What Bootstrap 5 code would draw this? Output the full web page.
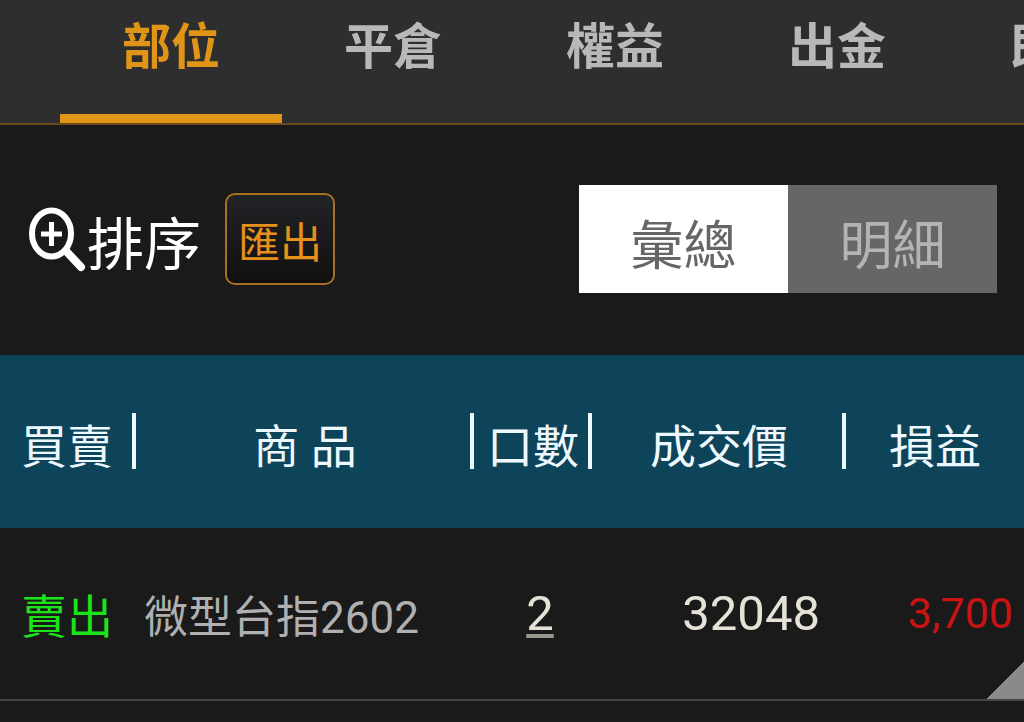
<!DOCTYPE html>
<html lang="zh-Hant">
<head>
<meta charset="utf-8">
<meta name="viewport" content="width=device-width, initial-scale=1">
<title>部位</title>
<link rel="stylesheet" href="https://cdn.jsdelivr.net/npm/bootstrap@5.3.0/dist/css/bootstrap.min.css">
<style>
  body { background: #1a1a1a; color: #fff; font-family: Roboto, "Noto Sans CJK TC", sans-serif; }
  button, a { font-family: inherit; }

  /* Tab strip */
  .tab-strip { background: #2e2e2e; border-bottom: 2px solid #694a1c; padding-left: 60px; }
  .tab-strip .nav-link { flex: 0 0 222px; height: 123px; padding: 12px 0 0; border-bottom: 9px solid transparent; border-radius: 0;
    color: #b8b8b8; font-size: 49px; font-weight: 700; line-height: 72px; text-align: center; white-space: nowrap; }
  .tab-strip .nav-link.active { color: #e09418; border-bottom-color: #e09418; }

  /* Toolbar */
  .toolbar { padding: 60px 27px 62px 28px; }
  .sort-btn { color: #fff; font-size: 57px; line-height: 80px; }
  .sort-btn span { padding-top: 14px; }
  .sort-btn svg { margin-right: 1px; }
  .export-btn { width: 110px; height: 92px; padding: 10px 0 0; border: 2px solid #a8701f; border-radius: 10px;
    background: linear-gradient(#222326, #101010); color: #e8911a; font-size: 42px; line-height: 60px; }
  .mode-switch .btn { width: 209px; height: 108px; padding: 16px 0 0; border: 0; border-radius: 0; background: #666; color: #b4b4b4; font-size: 53px; line-height: 80px; }
  .mode-switch .btn.active { background: #fff; color: #666; }

  /* Positions */
  .positions { table-layout: fixed; }
  .positions th, .positions td { padding: 0; white-space: nowrap; vertical-align: middle; }
  .positions th { height: 173px; padding-top: 12px; background: #0e4459 no-repeat right 58px / 4px 56px; color: #eef8ff; font-size: 46px; font-weight: 400; }
  .positions th:not(:last-child) { background-image: linear-gradient(#eef8ff, #eef8ff); }
  .positions td { height: 172px; border-bottom: 2px solid #444; font-size: 44px; }
  .positions .side-cell { padding-left: 21px; font-size: 46px; }
  .positions td.side-cell, .positions .product { padding-top: 8px; }
  .col-side { width: 136px; }
  .col-lots { width: 118px; }
  .col-price { width: 254px; }
  .col-profit { width: 178px; }
  .sell { color: #1be41b; }
  .positions .product { padding-left: 8px; color: #b0b0b0; }
  .positions .num { font-size: 49px; color: #e6e2d8; }
  .positions .lots { padding-left: 14px; }
  .lots a { color: inherit; text-decoration-color: #99968f; text-decoration-thickness: 4px; text-underline-offset: 4px; }
  .positions .price { padding-right: 26px; }
  .positions .profit { padding-right: 11px; color: #c91414; font-size: 43px;
    background: linear-gradient(135deg, transparent 50%, #8a8a8a 50%) no-repeat right bottom / 37px 37px; }
</style>
</head>
<body>
<nav class="nav tab-strip flex-nowrap overflow-hidden" aria-label="帳務">
  <a class="nav-link active" href="#" aria-current="page">部位</a>
  <a class="nav-link" href="#">平倉</a>
  <a class="nav-link" href="#">權益</a>
  <a class="nav-link" href="#">出金</a>
  <a class="nav-link" href="#">即時</a>
</nav>

<main>
  <div class="toolbar d-flex align-items-center justify-content-between">
    <div class="d-flex align-items-center gap-4">
      <button type="button" class="sort-btn btn p-0 border-0 d-flex align-items-center">
        <svg width="58" height="66" viewBox="0 0 58 66" fill="none" stroke="#fff" aria-hidden="true">
          <ellipse cx="23.500" cy="27.500" rx="19.500" ry="23" stroke-width="6"/>
          <path d="M23.500 16v24M13 28h21" stroke-width="5"/>
          <path d="M38 45L53 61" stroke-width="8" stroke-linecap="round"/>
        </svg>
        <span>排序</span>
      </button>
      <button type="button" class="export-btn btn">匯出</button>
    </div>
    <div class="mode-switch d-flex" role="group" aria-label="顯示方式">
      <button type="button" class="btn active" aria-pressed="true">彙總</button>
      <button type="button" class="btn" aria-pressed="false">明細</button>
    </div>
  </div>

  <table class="positions w-100">
    <colgroup>
      <col class="col-side"><col><col class="col-lots"><col class="col-price"><col class="col-profit">
    </colgroup>
    <thead>
      <tr>
        <th scope="col" class="side-cell">買賣</th>
        <th scope="col" class="text-center">商 品</th>
        <th scope="col" class="text-center">口數</th>
        <th scope="col" class="text-center">成交價</th>
        <th scope="col" class="text-center">損益</th>
      </tr>
    </thead>
    <tbody>
      <tr>
        <td class="side-cell sell">賣出</td>
        <td class="product">微型台指2602</td>
        <td class="num lots text-center"><a href="#">2</a></td>
        <td class="num price text-end">32048</td>
        <td class="profit text-end">3,700</td>
      </tr>
    </tbody>
  </table>
</main>
<script src="https://cdn.jsdelivr.net/npm/bootstrap@5.3.0/dist/js/bootstrap.bundle.min.js"></script>
</body>
</html>
